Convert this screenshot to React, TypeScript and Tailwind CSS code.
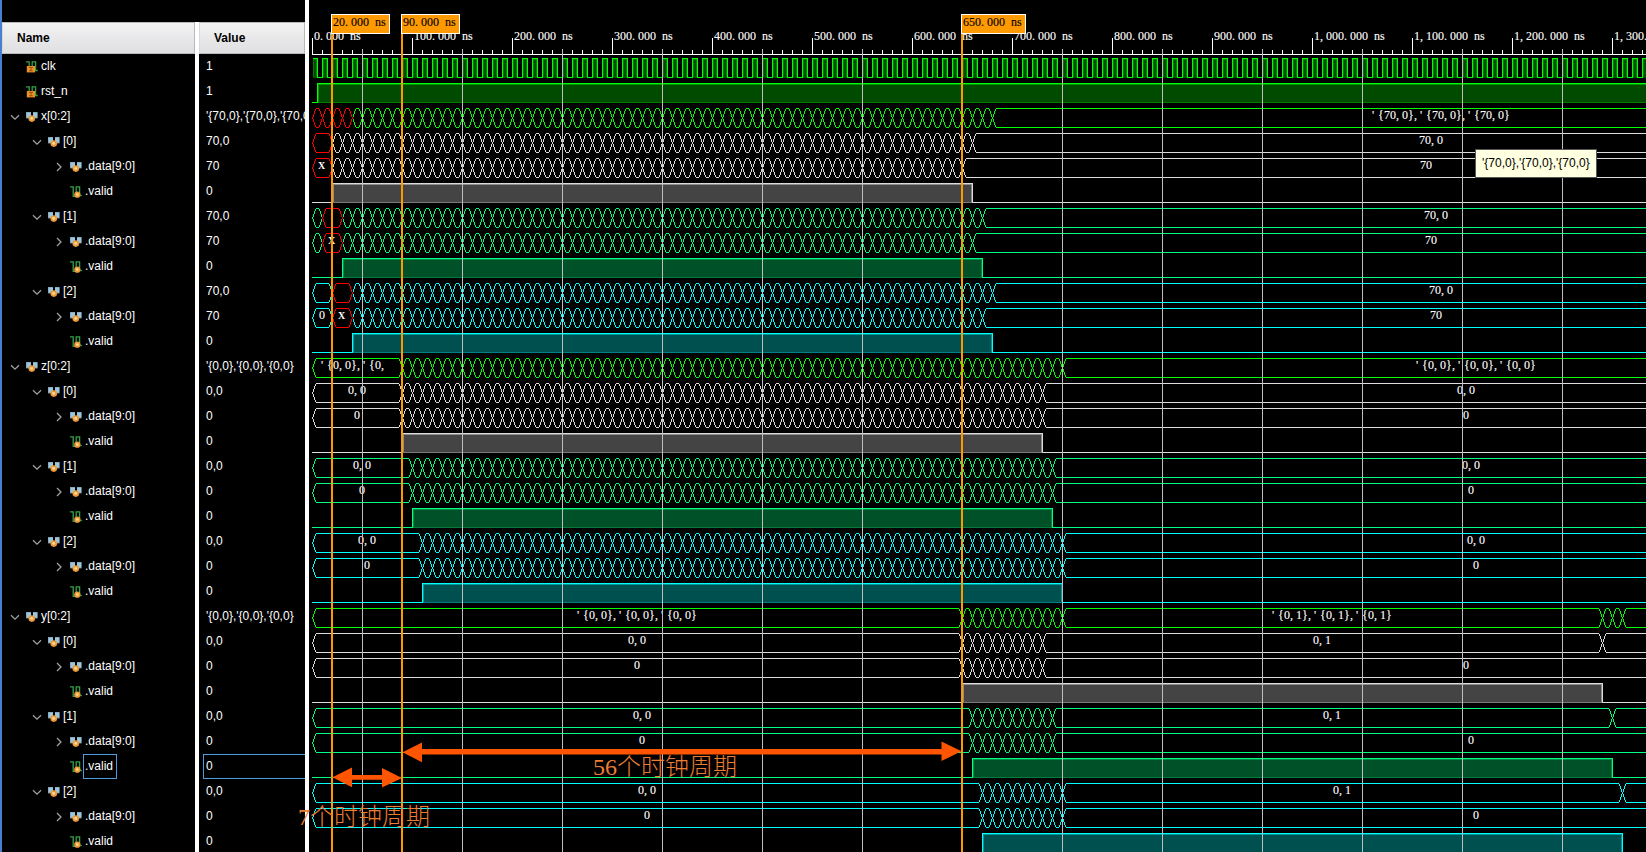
import React from "react";

type Kind = "clk" | "bus" | "bit";
type Row = { name: string; value: string; depth: number; kind: Kind; selected?: boolean };

const member = (i: number, agg: string, data: string, selected = false): Row[] => [
  { name: `[${i}]`, value: agg, depth: 1, kind: "bus" },
  { name: ".data[9:0]", value: data, depth: 2, kind: "bus" },
  { name: ".valid", value: "0", depth: 2, kind: "bit", selected },
];

const rows: Row[] = [
  { name: "clk", value: "1", depth: 0, kind: "clk" },
  { name: "rst_n", value: "1", depth: 0, kind: "clk" },
  { name: "x[0:2]", value: "'{70,0},'{70,0},'{70,0}", depth: 0, kind: "bus" },
  ...member(0, "70,0", "70"),
  ...member(1, "70,0", "70"),
  ...member(2, "70,0", "70"),
  { name: "z[0:2]", value: "'{0,0},'{0,0},'{0,0}", depth: 0, kind: "bus" },
  ...member(0, "0,0", "0"),
  ...member(1, "0,0", "0"),
  ...member(2, "0,0", "0"),
  { name: "y[0:2]", value: "'{0,0},'{0,0},'{0,0}", depth: 0, kind: "bus" },
  ...member(0, "0,0", "0"),
  ...member(1, "0,0", "0", true),
  ...member(2, "0,0", "0"),
];

const padFor = ["pl-[7px]", "pl-[29px]", "pl-[51px]"];

function RowIcon({ kind }: { kind: Kind }) {
  if (kind === "bus")
    return (
      <svg className="h-[12px] w-[12px] shrink-0" viewBox="0 0 12 12">
        <rect x="0" y="1" width="5" height="6.4" fill="#7f9cab" />
        <rect x="7" y="1" width="4.6" height="6.4" fill="#7f9cab" />
        <rect x="0.6" y="1.6" width="4.4" height="5" fill="#9cc6de" />
        <rect x="7" y="1.6" width="4.2" height="5" fill="#9cc6de" />
        <circle cx="5.8" cy="7.6" r="3.3" fill="#f09a35" />
        <circle cx="5.7" cy="7.4" r="1.4" fill="#ffdca0" />
      </svg>
    );
  return (
    <svg className="h-[12px] w-[12px] shrink-0" viewBox="0 0 12 12">
      <path d="M0 0.9H3.2V10.4H6.2V0.9H9.6V9.5H11.8" fill="none" stroke="#35a048" strokeWidth="1.3" />
      {kind === "clk" ? (
        <g>
          <rect x="0.8" y="5" width="8.2" height="6.4" fill="#f08f28" />
          <path d="M3 6.4H7M5 6.4V9.8M3.2 9.8H6.8" stroke="#8a4a10" strokeWidth="0.9" />
        </g>
      ) : (
        <g>
          <circle cx="7.3" cy="8.7" r="3.1" fill="#f09a35" />
          <circle cx="7.3" cy="8.5" r="1.3" fill="#ffdca0" />
        </g>
      )}
    </svg>
  );
}

function Chevron({ row }: { row: Row }) {
  const open = row.depth < 2;
  return (
    <svg className="mr-[6px] h-[10px] w-[11px] shrink-0" viewBox="0 0 11 10">
      {row.kind === "bus" && (
        <path
          d={open ? "M2 3.2L6 7.2L10 3.2" : "M4 1L8 5L4 9"}
          fill="none"
          stroke="#a0a0a0"
          strokeWidth="1.3"
        />
      )}
    </svg>
  );
}

const GREEN = { line: "#00ff00", mid: "#009600", base: "#007d00", fill: "#004b00" };
const WHITE = { line: "#dcdcdc", mid: "#8c8c8c", base: "#7a7a7a", fill: "#444444" };
const SPRING = { line: "#00ff7f", mid: "#008c46", base: "#007d3e", fill: "#005028" };
const CYAN = { line: "#00ffff", mid: "#009696", base: "#008080", fill: "#005050" };
type Tone = typeof GREEN;
const RED = "#ff0000";
const ORIGIN = 312;
const END = 1578;

const topOf = (row: number) => 58 + row * 25;
const range = (from: number, to: number) =>
  Array.from({ length: Math.round((to - from) / 10) + 1 }, (_, i) => from + i * 10);

/** Text on a fixed six pixel pitch. */
function Mono({ x, y, text, fill = "#ffffff" }: { x: number; y: number; text: string; fill?: string }) {
  const wide = text === "X";
  return (
    <text
      className={`whitespace-pre font-['Liberation_Serif',serif] ${wide ? "text-[10px] font-bold" : "text-[12px]"}`}
      fill={fill}
      stroke={fill}
      strokeWidth={wide ? 0 : 0.12}
      x={wide ? x - 1 : text.split("").map((_, i) => x + i * 6).join(" ")}
      y={y}
    >
      {text}
    </text>
  );
}

type BusProps = {
  row: number;
  tone: Tone;
  edges: number[];
  red?: number[];
  labels?: Record<number, string>;
};

/** Rows covered by each pixel column of a value transition, from the crossing outwards. */
const steps = [
  [9, 11],
  [6, 9],
  [3, 6],
  [1, 3],
];

function Bus({ row, tone, edges, red = [], labels = {} }: BusProps) {
  const top = topOf(row);
  const all = [...edges, END];
  const cell = (a: number, b: number) => {
    const l = ORIGIN + a;
    const r = ORIGIN + b;
    const slopes = steps
      .map(([from, to], k) =>
        [l + k + 0.5, r - k + 0.5]
          .map((x) => `M${x} ${top + from}V${top + to}M${x} ${top + 20 - to}V${top + 20 - from}`)
          .join("")
      )
      .join("");
    return `${slopes}M${l + 4} ${top + 0.5}H${r - 3}M${l + 4} ${top + 19.5}H${r - 3}`;
  };
  const parts = edges.map((a, i) => ({ a, b: all[i + 1] }));
  const normal = parts.filter((p) => !red.includes(p.a)).map((p) => cell(p.a, p.b)).join("");
  const bad = parts.filter((p) => red.includes(p.a)).map((p) => cell(p.a, p.b)).join("");
  return (
    <g>
      <path d={normal} fill="none" stroke={tone.line} shapeRendering="crispEdges" />
      {bad && <path d={bad} fill="none" stroke={RED} shapeRendering="crispEdges" />}
      {parts
        .filter((p) => labels[p.a])
        .map((p) => {
          const text = labels[p.a];
          const x = Math.round(ORIGIN + (p.a + p.b) / 2 - text.length * 3);
          return <Mono key={p.a} x={x} y={topOf(row) + 11} text={text} />;
        })}
    </g>
  );
}

function Level({ row, tone, rise, fall }: { row: number; tone: Tone; rise: number; fall: number }) {
  const t = topOf(row);
  const l = ORIGIN + rise;
  const r = ORIGIN + fall;
  return (
    <g shapeRendering="crispEdges">
      <rect x={l} y={t} width={r - l} height={20} fill={tone.fill} />
      <path d={`M${l} ${t + 19.5}H${r}`} stroke={tone.base} />
      <path d={`M${l + 1.5} ${t + 19}V${t + 1.5}H${r - 0.5}V${t + 19}`} fill="none" stroke={tone.mid} />
      <path d={`M${ORIGIN} ${t + 19.5}H${l + 0.5}V${t + 0.5}H${r + 0.5}V${t + 19.5}H1646`} fill="none" stroke={tone.line} />
    </g>
  );
}

function Clock() {
  const t = topOf(0);
  return (
    <g shapeRendering="crispEdges">
      {range(0, 1330).map((n) => {
        const x = ORIGIN + n;
        return (
          <g key={n}>
            <rect x={x + 1} y={t + 1} width={4} height={19} fill="#004b00" />
            <path d={`M${x + 1.5} ${t + 19}V${t + 1.5}H${x + 4.5}V${t + 19}`} fill="none" stroke="#007800" />
            <path
              d={`M${x + 0.5} ${n === 0 ? t + 0.5 : t + 19.5}V${t + 0.5}H${x + 5.5}V${t + 19.5}H${x + 10.5}`}
              fill="none"
              stroke={GREEN.line}
            />
          </g>
        );
      })}
    </g>
  );
}

const tick = (n: number) => String(n).replace(/\B(?=(\d{3})+$)/g, ",") + ".000 ns";

function Ruler() {
  return (
    <g>
      <path
        d={
          `M${ORIGIN} 54.5H1646` +
          range(0, 1330)
            .map((n) => `M${ORIGIN + n + 0.5} ${n % 100 === 0 ? 38 : 50}V54`)
            .join("")
        }
        stroke="#ffffff"
        shapeRendering="crispEdges"
      />
      {range(0, 1300)
        .filter((n) => n % 100 === 0)
        .map((n) => (
          <Mono key={n} x={ORIGIN + n + 2} y={40} text={tick(n)} />
        ))}
    </g>
  );
}

function Marker({ at }: { at: number }) {
  const x = ORIGIN + at - 1;
  const text = `${at}.000 ns`;
  return (
    <g>
      <rect x={x} y={34} width={2} height={818} fill="#ff9900" />
      <rect x={x + 0.5} y={14.5} width={text.length * 6 + 4} height={19} fill="#ff9900" stroke="#ffffff" />
      <Mono x={x + 2} y={25.5} text={text} fill="#000000" />
    </g>
  );
}

function Waves() {
  const x3 = "'{70,0},'{70,0},'{70,0}";
  const z3 = "'{0,0},'{0,0},'{0,0}";
  return (
    <svg className="block h-[852px] w-[1337px] shrink-0" viewBox="309 0 1337 852">
      <Ruler />
      <Clock />
      <Level row={1} tone={GREEN} rise={5} fall={1400} />

      <Bus row={2} tone={GREEN} edges={range(0, 680)} red={[0, 10, 20, 30]} labels={{ 680: x3 }} />
      <Bus row={3} tone={WHITE} edges={[0, ...range(20, 660)]} red={[0]} labels={{ 660: "70,0" }} />
      <Bus row={4} tone={WHITE} edges={[0, ...range(20, 650)]} red={[0]} labels={{ 0: "X", 650: "70" }} />
      <Level row={5} tone={WHITE} rise={20} fall={660} />
      <Bus row={6} tone={SPRING} edges={[0, 10, ...range(30, 670)]} red={[10]} labels={{ 670: "70,0" }} />
      <Bus row={7} tone={SPRING} edges={[0, 10, ...range(30, 660)]} red={[10]} labels={{ 10: "X", 660: "70" }} />
      <Level row={8} tone={SPRING} rise={30} fall={670} />
      <Bus row={9} tone={CYAN} edges={[0, 20, ...range(40, 680)]} red={[20]} labels={{ 680: "70,0" }} />
      <Bus row={10} tone={CYAN} edges={[0, 20, ...range(40, 670)]} red={[20]} labels={{ 0: "0", 20: "X", 670: "70" }} />
      <Level row={11} tone={CYAN} rise={40} fall={680} />

      <Bus row={12} tone={GREEN} edges={[0, ...range(90, 750)]} labels={{ 0: "'{0,0},'{0, ", 750: z3 }} />
      <Bus row={13} tone={WHITE} edges={[0, ...range(90, 730)]} labels={{ 0: "0,0", 730: "0,0" }} />
      <Bus row={14} tone={WHITE} edges={[0, ...range(90, 730)]} labels={{ 0: "0", 730: "0" }} />
      <Level row={15} tone={WHITE} rise={90} fall={730} />
      <Bus row={16} tone={SPRING} edges={[0, ...range(100, 740)]} labels={{ 0: "0,0", 740: "0,0" }} />
      <Bus row={17} tone={SPRING} edges={[0, ...range(100, 740)]} labels={{ 0: "0", 740: "0" }} />
      <Level row={18} tone={SPRING} rise={100} fall={740} />
      <Bus row={19} tone={CYAN} edges={[0, ...range(110, 750)]} labels={{ 0: "0,0", 750: "0,0" }} />
      <Bus row={20} tone={CYAN} edges={[0, ...range(110, 750)]} labels={{ 0: "0", 750: "0" }} />
      <Level row={21} tone={CYAN} rise={110} fall={750} />

      <Bus
        row={22}
        tone={GREEN}
        edges={[0, ...range(650, 750), 1290, 1300, 1310]}
        labels={{ 0: z3, 750: "'{0,1},'{0,1},'{0,1}" }}
      />
      <Bus row={23} tone={WHITE} edges={[0, ...range(650, 730), 1290]} labels={{ 0: "0,0", 730: "0,1" }} />
      <Bus row={24} tone={WHITE} edges={[0, ...range(650, 730)]} labels={{ 0: "0", 730: "0" }} />
      <Level row={25} tone={WHITE} rise={650} fall={1290} />
      <Bus row={26} tone={SPRING} edges={[0, ...range(660, 740), 1300]} labels={{ 0: "0,0", 740: "0,1" }} />
      <Bus row={27} tone={SPRING} edges={[0, ...range(660, 740)]} labels={{ 0: "0", 740: "0" }} />
      <Level row={28} tone={SPRING} rise={660} fall={1300} />
      <Bus row={29} tone={CYAN} edges={[0, ...range(670, 750), 1310]} labels={{ 0: "0,0", 750: "0,1" }} />
      <Bus row={30} tone={CYAN} edges={[0, ...range(670, 750)]} labels={{ 0: "0", 750: "0" }} />
      <Level row={31} tone={CYAN} rise={670} fall={1310} />

      <path
        d={range(0, 120).map((n) => `M${ORIGIN + 50.5 + n * 10} 49V852`).join("")}
        stroke="#bebebe"
        shapeRendering="crispEdges"
      />
      <Marker at={20} />
      <Marker at={90} />
      <Marker at={650} />

      <g fill="#ff5500">
        <path d="M402.5 752.3L422 742.6V749H941.5V741.5L961.5 751.3L941.5 761V754.4H422V762.3Z" />
        <path d="M332.5 777.3L352 767.6V775H382V768L402 778L382 787.5V779.7H352V787.3Z" />
      </g>
    </svg>
  );
}

const headCell =
  "flex h-[32px] items-center border border-[#b9b9bb] border-l-[#d8d8d8] bg-gradient-to-b from-[#f3f3f3] to-[#dfdfe2] pb-px text-[12px] font-bold text-black";

export default function App() {
  return (
    <div className="relative flex h-[852px] w-[1646px] overflow-hidden bg-black font-['Liberation_Sans',Arial,sans-serif] text-[12px] text-white">
      <div className="w-[2px] shrink-0 bg-[#4a7fd0]" />
      <div className="w-[193px] shrink-0 pt-[22px]">
        <div className={`${headCell} pl-[14px]`}>Name</div>
        {rows.map((row, i) => (
          <div key={i} className={`flex h-[25px] items-center ${padFor[row.depth]}`}>
            <Chevron row={row} />
            <RowIcon kind={row.kind} />
            <span
              className={`ml-px flex h-[25px] items-center border pb-[2px] pl-px pr-[3px] ${
                row.selected ? "border-[#4a9be0]" : "border-transparent"
              }`}
            >
              {row.name}
            </span>
          </div>
        ))}
      </div>
      <div className="w-[4px] shrink-0 pt-[22px]">
        <div className="h-full bg-white" />
      </div>
      <div className="w-[106px] shrink-0 overflow-hidden pt-[22px]">
        <div className={`${headCell} pl-[14px]`}>Value</div>
        {rows.map((row, i) => (
          <div
            key={i}
            className={`ml-[4px] flex h-[25px] items-center whitespace-nowrap border border-r-0 pb-[2px] pl-[2px] ${
              row.selected ? "border-[#4a9be0]" : "border-transparent"
            }`}
          >
            {row.value}
          </div>
        ))}
      </div>
      <div className="w-[4px] shrink-0 bg-white" />
      <Waves />

      <div className="absolute left-[1475px] top-[149px] flex h-[29px] w-[122px] items-center whitespace-nowrap border border-[#555555] bg-[#ffffe1] pb-[2px] pl-[6px] text-black">
        {"'{70,0},'{70,0},'{70,0}"}
      </div>
      <div className="absolute left-[593px] top-[750px] whitespace-nowrap font-['Liberation_Serif','Noto_Sans_CJK_SC',serif] text-[24px] font-light leading-[34px] text-[#ed7d31]">
        56个时钟周期
      </div>
      <div className="absolute left-[298px] top-[800px] whitespace-nowrap font-['Liberation_Serif','Noto_Sans_CJK_SC',serif] text-[24px] font-light leading-[34px] text-[#ed7d31]">
        7个时钟周期
      </div>
    </div>
  );
}
